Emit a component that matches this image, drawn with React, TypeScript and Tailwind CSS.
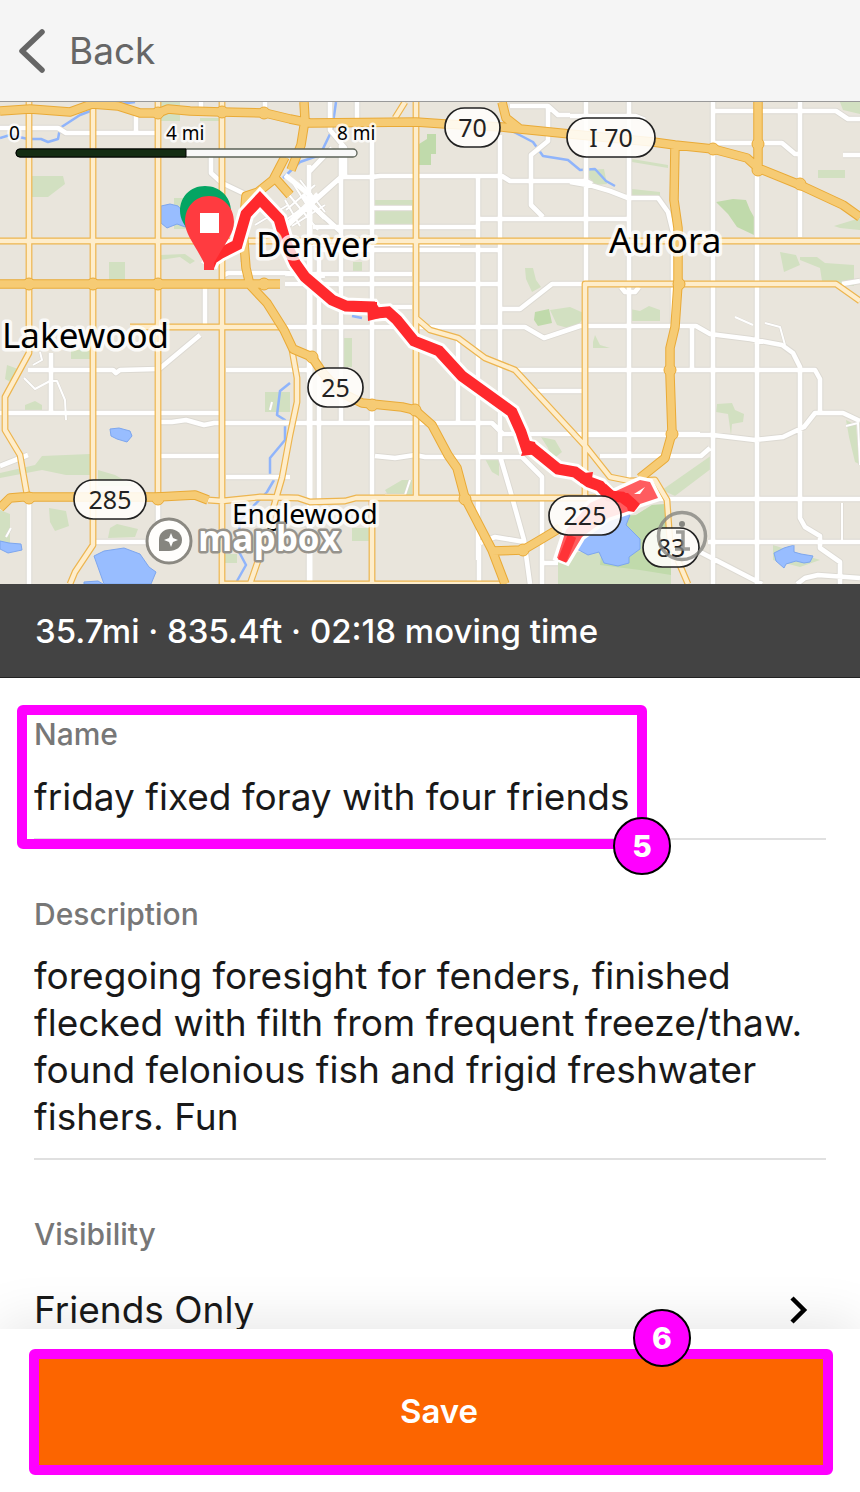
import React from "react";

const MINOR = [
  "M265 102V112", "M136 115V133", "M0 128H58L66 133H158", "M201 102V112",
  "M211 157V173L222 183L245 194", "M205 284V327", "M222 276L228 273H285L325 276",
  "M158 370L200 335", "M51 353V413", "M28 370H113L116 373L120 370L158 369",
  "M0 413H220", "M160 422H172L186 420L204 425L214 423H492L503 434H700", "M160 456H220",
  "M226 370H310", "M226 477H290", "M29 498V584", "M92 542H150", "M158 505V545",
  "M0 466L28 455", "M309 165V584", "M319 250V500", "M341 140V423",
  "M372 140V584", "M285 274H412", "M285 284H500", "M390 307H412", "M285 327H412",
  "M330 102V130L345 148V175", "M357 102V130", "M309 172L332 148", "M309 205L341 177H372L380 176H502L510 181H586L592 184",
  "M288 225L341 177", "M309 203L340 231", "M313 227H480", "M315 250H500", "M372 208H412",
  "M478 176V560", "M500 135V452", "M480 219H629", "M500 309H520L552 284H586",
  "M416 327H525L544 338L580 326H696L710 334L750 339L782 345L793 353L800 367V395V518L805 527L820 536V548L840 562V584",
  "M458 340V423", "M375 456L395 458L415 455L425 457H522L542 477V584", "M500 456L510 490L524 540L530 584",
  "M479 545V584", "M480 543L495 537L525 542", "M542 563H558",
  "M510 106H548L558 115H570", "M548 106V141L531 155V205L543 217",
  "M570 116H635L645 120", "M586 102V284", "M629 102V480", "M570 182L593 186L610 191L628 198H658L668 212L673 232V327",
  "M713 102V584", "M713 111H836L848 119H860", "M713 143H782L795 154H800", "M800 102V237", "M843 155H860",
  "M757 176V584", "M518 370H815L820 379V413H843L860 421", "M820 413H815L804 427L783 437L755 440L713 435H580",
  "M600 456H701L710 448", "M535 391H586", "M657 499H860", "M708 542H860", "M692 327V370",
  "M700 552L762 584", "M797 584L805 578L818 575L860 578", "M842 284L860 281", "M621 287L625 292H635L639 287",
];
const STREETS = [
  "M285 190L318 230", "M291 180L310 210", "M286 210L315 185", "M286 220L320 195", "M292 226L325 205",
  "M285 200L300 226", "M300 180L325 212", "M255 225L288 205", "M262 240L300 215",
  "M24 378L35 389L50 381H57L65 400L66 420", "M33 365L42 360L40 352",
  "M6 537L11 528M270 410L272 402", "M765 323L780 327L785 345",
  "M385 495H405L410 480", "M846 426L858 423L860 465", "M735 317L753 325", "M842 503V540", "M285 245H460",
];
const YELLOW = [
  "M29 102V353L5 397V430L20 455L27 495", "M93 102V545L75 572L70 584", "M158 102V495", "M222 102V584",
  "M0 241H860", "M130 327H285", "M416 102V499",
  "M416 318L430 330L458 338L485 358L515 370L575 435L587 448L610 477L630 481L655 480L667 500L670 542L688 584",
  "M405 102L395 118", "M208 500L222 501L260 497L298 498L310 502L345 501L356 498H600",
  "M292 350L297 378V402L290 435L282 478L275 502L260 555L250 584",
  "M372 498V584", "M220 584H500", "M585 500V284H836L860 301",
];
const HIGHWAY = [
  "M0 111L30 109L70 112L92 104L118 106L140 113H158L168 109L190 111L222 112L265 113L290 119L310 123L416 122L445 124L502 127L520 129L570 134L653 142L675 145L713 149L747 158L758 168L800 185L843 205L860 217",
  "M675 145L674 200L678 228V284L675 327L670 348V375L672 433L665 458L640 478",
  "M758 102V168", "M304 102L305 120L301 145L291 170",
  "M285 157L273 180L258 192L246 196L243 230L246 268L250 285L267 303L284 330L293 349L312 357L322 372L340 392L362 403L402 407L415 410L432 425L448 455L457 468L465 498L492 550L505 584",
  "M492 551L523 550L540 540L560 528", "M0 284H280", "M0 508L10 498L22 497H157L195 495L208 500", "M502 102L506 118L520 129",
  "M275 178L290 195",
];
const RIVERS = [
  "M0 138L10 135L28 139H41L48 142L58 139L60 128L80 115L93 110", "M120 104L135 102",
  "M336 102L332 130L320 155L300 162L283 178", "M510 130L533 142L543 156L568 160L580 170L595 169L606 181L615 186",
  "M290 383L280 391L277 415L285 420V440L270 458V475", "M274 480L267 492L240 520L238 550L246 565L237 581", "M352 316L362 318", "M242 245V262",
];
const GREENS = [
  "M32 176H63L65 184L48 197H32Z", "M109 262H125V281H109Z", "M161 102H180V121H161Z", "M200 118H222V121H200Z",
  "M375 200H413V228H375Z", "M630 309L640 311L649 306L660 310V321H631Z", "M780 252L796 255L800 265L784 272Z",
  "M800 257H817L825 263L854 265V286H838L822 281L820 268L800 260Z",
  "M550 310L570 307L586 314L575 330L557 325Z", "M35 465L42 456L90 454V475H66L42 470L0 478V473Z",
  "M49 508L66 511L69 526L55 531L50 522Z", "M110 528L117 524L138 529L135 537L108 538Z", "M265 392H290V412H265Z",
  "M589 170L604 169L607 184L596 185L588 177Z", "M662 490L712 455V468L675 496Z", "M717 404L732 403L735 410L744 414L743 422L732 424L731 435L728 414L716 412Z",
  "M773 545L820 560L800 567L773 560Z", "M846 420L856 425L859 464L855 462L849 437Z", "M541 437L555 440L562 452L552 460L548 448Z",
  "M484 457L499 460V476L492 472Z", "M385 490L402 480H412V495H388Z", "M343 338H352V367H343Z", "M840 102H860V114L843 110Z",
  "M818 170H845V178H818Z", "M525 268H533L536 280L541 287L532 292L526 279Z", "M0 510L10 514V545L0 546Z", "M7 365L18 369L14 384L5 379Z",
  "M25 405L35 401L42 405V412H25Z", "M71 350H90V359H71Z", "M174 198H190V229H174Z", "M225 554H237V563H225Z", "M352 528H370V541H352Z",
  "M595 335L600 345L610 348H593V342Z", "M632 159L668 165V168L632 162Z", "M632 189L660 192V197H632Z", "M834 226L860 218V230L840 228Z",
  "M160 255L185 254L195 261L190 264L180 257L160 260Z", "M98 470L115 475L135 486H98Z", "M353 262H362V274H353Z",
  "M595 584H558V556L565 552L600 552L605 518L636 515L652 505L667 504L671 550V584Z",
];
const DARK_GREENS = [
  "M419 144L427 139V134H436V154H431V165H419Z", "M716 202L733 199L746 200L750 210L754 217V235L737 227L728 214Z",
  "M605 518L636 515L652 505L667 504L671 550V575L640 570L600 565Z", "M535 312L549 309L552 323L538 326L534 320Z",
];
const LAKES = [
  "M161 206L170 204L178 206L186 215L188 228L177 224L167 228L161 223Z",
  "M110 429L119 428L130 431L132 436L127 442L117 439L111 436Z",
  "M94 556L104 551L124 548L140 554L149 567L156 572L151 584H104Z",
  "M84 582L98 581L103 584H84Z", "M0 541L9 543L21 544L22 550L8 553L0 549Z",
  "M577 541L594 528L617 512L630 515L626 525L640 539L640 549L629 557L629 563L618 566L604 563L599 552L588 555L577 549Z",
  "M774 553L784 548L794 545L794 552L801 554L813 556L810 562L804 563L796 561L786 564L784 568L776 561Z",
];
const ROUTE = "M209 266L212 259L221 253L237 245L246 214L260 199L279 219L286 243L295 263L305 277L332 300L346 306L372 307L376 313L388 312L397 320L414 341L439 351L462 376L512 412L521 432L526 447L532 448L558 469L575 472L589 482L600 486L609 496L622 497L633 505";
const ROUTE_LOOP = "M603 497L640 480L650 482L658 498L637 505L632 510L608 518L582 537L567 562L557 558L566 530L590 503Z";

const JUNCTIONS = [
  [29, 284], [93, 284], [158, 284], [158, 113], [222, 112], [264, 113], [713, 149], [758, 144], [758, 170], [800, 184],
  [679, 284], [670, 370], [672, 434], [415, 410], [372, 405], [465, 499], [29, 498], [158, 499], [312, 357], [523, 550], [264, 284],
];
const SHIELDS = [
  { x: 445, y: 108, w: 55, label: "70" }, { x: 567, y: 118, w: 88, label: "I 70" },
  { x: 308, y: 368, w: 55, label: "25" }, { x: 74, y: 480, w: 72, label: "285" },
  { x: 549, y: 496, w: 72, label: "225" }, { x: 643, y: 528, w: 56, label: "83" },
];
const PLACES = [
  { x: 256, y: 257, size: 35, label: "Denver" }, { x: 609, y: 253, size: 35, label: "Aurora" },
  { x: 2, y: 348, size: 35, label: "Lakewood" }, { x: 232, y: 524, size: 28, label: "Englewood" },
  { x: 9, y: 140, size: 19, label: "0" }, { x: 166, y: 140, size: 19, label: "4 mi" }, { x: 337, y: 140, size: 19, label: "8 mi" },
];

function Lines({ paths, color, width }: { paths: string[]; color: string; width: number }) {
  return <path d={paths.join("")} fill="none" stroke={color} strokeWidth={width} strokeLinejoin="round" />;
}

function RouteMap() {
  return (
    <svg className="block h-[482px] w-full shrink-0 bg-[#e9e5dc] font-['Noto_Sans',sans-serif]" viewBox="0 102 860 482" preserveAspectRatio="xMidYMid slice" role="img" aria-label="Ride route from Denver to Aurora">
      <path d={GREENS.join("")} fill="#d2e0c1" />
      <path d={DARK_GREENS.join("")} fill="#c0daab" />
      <path d={LAKES.join("")} fill="#98bdff" stroke="#7da6ee" strokeWidth="1" />
      <Lines paths={RIVERS} color="#8fb4fb" width={2.5} />
      <Lines paths={MINOR} color="#dcd9d2" width={6.5} />
      <Lines paths={STREETS} color="#d9d6d0" width={3} />
      <Lines paths={STREETS} color="#fff" width={2} />
      <Lines paths={MINOR} color="#fff" width={4.6} />
      <Lines paths={["M285 175L310 195V584M302 195L325 218M288 224L318 194"]} color="#fff" width={5} />
      <Lines paths={YELLOW} color="#edb54f" width={6.8} />
      <Lines paths={YELLOW} color="#feedcb" width={4.4} />
      <Lines paths={HIGHWAY} color="#e9aa37" width={9.5} />
      <g fill="#f6cb74" stroke="#e9aa37" strokeWidth="1">
        {JUNCTIONS.map(([x, y]) => (
          <circle key={`${x}-${y}`} cx={x} cy={y} r="6" />
        ))}
      </g>
      <Lines paths={HIGHWAY} color="#f6cb74" width={7.5} />

      <g fill="none" strokeLinejoin="miter">
        <path d={ROUTE_LOOP} stroke="#fff" strokeWidth="7" />
        <path d={ROUTE} stroke="#fff" strokeWidth="17" />
        <path d={ROUTE_LOOP} fill="#ff5c5f" />
        <path d="M562 561L572 536" stroke="#ff3337" strokeWidth="9" />
        <path d={ROUTE} stroke="#ff292d" strokeWidth="11" />
      </g>
      <path d="M367 302H377V314L388 316L368 321ZM526 440L535 442L538 454L521 456ZM584 473L593 472L591 485L580 483ZM606 484L616 493H628L640 504L634 512L628 511L626 503L605 499Z" fill="#ff292d" />
      <path d="M634 494L645 487L640 494Z" fill="#fff" />

      <path d="M205 186C190 186 180 197 180 211C180 228 200 238 205 262C211 238 231 228 231 211C231 197 220 186 205 186Z" fill="#04a563" />
      <path d="M209 196C195 196 185 207 185 222C185 234 194 243 204 263V270H214V263C225 243 234 234 234 222C234 207 223 196 209 196Z" fill="#ff3b40" />
      <rect x="200" y="213" width="19" height="20" fill="#fff" />

      <rect x="16" y="149" width="341" height="8" rx="4" fill="#f8f8f8" stroke="#5b6257" strokeWidth="1.3" />
      <path d="M186 149H20a4 4 0 0 0 0 8H186Z" fill="#142d13" stroke="#000" strokeWidth="1" />

      {SHIELDS.map((s) => (
        <g key={s.label}>
          <rect x={s.x} y={s.y} width={s.w} height="39" rx="19.5" fill="#fffefc" fillOpacity="0.88" stroke="#222" strokeWidth="1.7" />
          <text x={s.x + s.w / 2} y={s.y + 29} textAnchor="middle" fontSize="25" fill="#222">{s.label}</text>
        </g>
      ))}
      {PLACES.map((p) => (
        <text key={p.label} x={p.x} y={p.y} fontSize={p.size} fill="#000" stroke="#fff" strokeOpacity="0.8" strokeWidth={p.size > 20 ? 7 : 5} strokeLinejoin="round" paintOrder="stroke">{p.label}</text>
      ))}

      <circle cx="169" cy="541" r="22" fill="#fffefc" stroke="#8b8982" strokeWidth="3" />
      <path d="M159 551V540C159 533 164 529 170 529C177 529 182 534 182 540C182 547 176 551 169 551Z" fill="#86857f" />
      <path d="M171 533L173 538L178 540L173 542L171 547L169 542L164 540L169 538Z" fill="#fff" />
      <text x="198" y="551" fontSize="35" fontWeight="700" fill="#fff" stroke="#96938c" strokeWidth="5" strokeLinejoin="round" paintOrder="stroke" className="font-['Open_Sans',sans-serif]">mapbox</text>
      <g fill="none" stroke="#868681" strokeOpacity="0.8" strokeWidth="3.5">
        <circle cx="682" cy="536" r="23.5" />
        <path d="M676 532H683V549M675 549H690" />
      </g>
      <circle cx="682" cy="524" r="3" fill="#868681" />
    </svg>
  );
}

function Badge({ children, className }: { children: React.ReactNode; className: string }) {
  return (
    <span className={`absolute z-20 flex size-[58px] items-center justify-center rounded-full border-2 border-black bg-[#ff00ff] text-[30px] leading-none font-extrabold text-white ${className}`}>
      {children}
    </span>
  );
}

const label = "block text-[30px] leading-[40px] font-medium text-[#777]";
const field = "block w-full resize-none border-b-2 border-[#e0e0e0] bg-transparent text-[37px] text-[#191919] outline-none";

export default function App() {
  return (
    <div className="flex h-screen flex-col bg-white font-['Inter',sans-serif]">
      <header className="flex h-[102px] shrink-0 items-center border-b border-[#999] bg-[#f5f5f5] px-[18px]">
        <button type="button" className="flex items-center gap-6 text-[37px] leading-[46px] text-[#666]">
          <svg className="h-[44px] w-[27px]" viewBox="0 0 27 44" fill="none" stroke="currentColor" strokeWidth="5.5" strokeLinecap="round" strokeLinejoin="round" aria-hidden="true">
            <path d="M24 3L4 22L24 41" />
          </svg>
          Back
        </button>
      </header>

      <RouteMap />

      <p className="shrink-0 border-b border-[#222] bg-[#434343] px-[35px] pt-6 pb-[23px] text-[33px] leading-[46px] font-medium text-white">
        35.7mi · 835.4ft · 02:18 moving time
      </p>

      <main className="min-h-0 flex-1 overflow-y-auto px-[34px] pt-9 [scrollbar-width:none]">
        <form id="ride" className="flex flex-col gap-[54px]">
          <div className="relative">
            <label htmlFor="name" className={label}>Name</label>
            <input id="name" defaultValue="friday fixed foray with four friends" className={`${field} h-[86px]`} />
            <div className="pointer-events-none absolute -top-[9px] -left-[17px] h-[144px] w-[630px] rounded-[6px] border-[10px] border-[#ff00ff]">
              <Badge className="-right-[34px] -bottom-[36px]">5</Badge>
            </div>
          </div>
          <div>
            <label htmlFor="description" className={label}>Description</label>
            <textarea
              id="description"
              rows={4}
              className={`${field} overflow-hidden py-[18px] leading-[47px]`}
              defaultValue="foregoing foresight for fenders, finished flecked with filth from frequent freeze/thaw. found felonious fish and frigid freshwater fishers. Fun"
            />
          </div>
          <div>
            <span id="visibility" className={label}>Visibility</span>
            <button type="button" aria-labelledby="visibility choice" className="flex h-[112px] w-full items-center justify-between pr-[18px] text-[37px] text-[#191919]">
              <span id="choice">Friends Only</span>
              <svg className="h-7 w-[18px]" viewBox="0 0 18 28" fill="none" stroke="#000" strokeWidth="4.5" aria-hidden="true">
                <path d="M2 2L14 14L2 26" />
              </svg>
            </button>
          </div>
        </form>
      </main>

      <footer className="relative z-10 shrink-0 bg-white pt-5 pr-[27px] pb-[17px] pl-[29px] shadow-[0_-6px_50px_rgba(0,0,0,0.1)]">
        <button type="submit" form="ride" className="relative block h-[126px] w-full rounded-[6px] border-[10px] border-[#ff00ff] bg-[#fc6500] pl-4 text-[33px] font-semibold text-white">
          Save
          <Badge className="-top-[50px] right-[132px]">6</Badge>
        </button>
      </footer>
    </div>
  );
}
